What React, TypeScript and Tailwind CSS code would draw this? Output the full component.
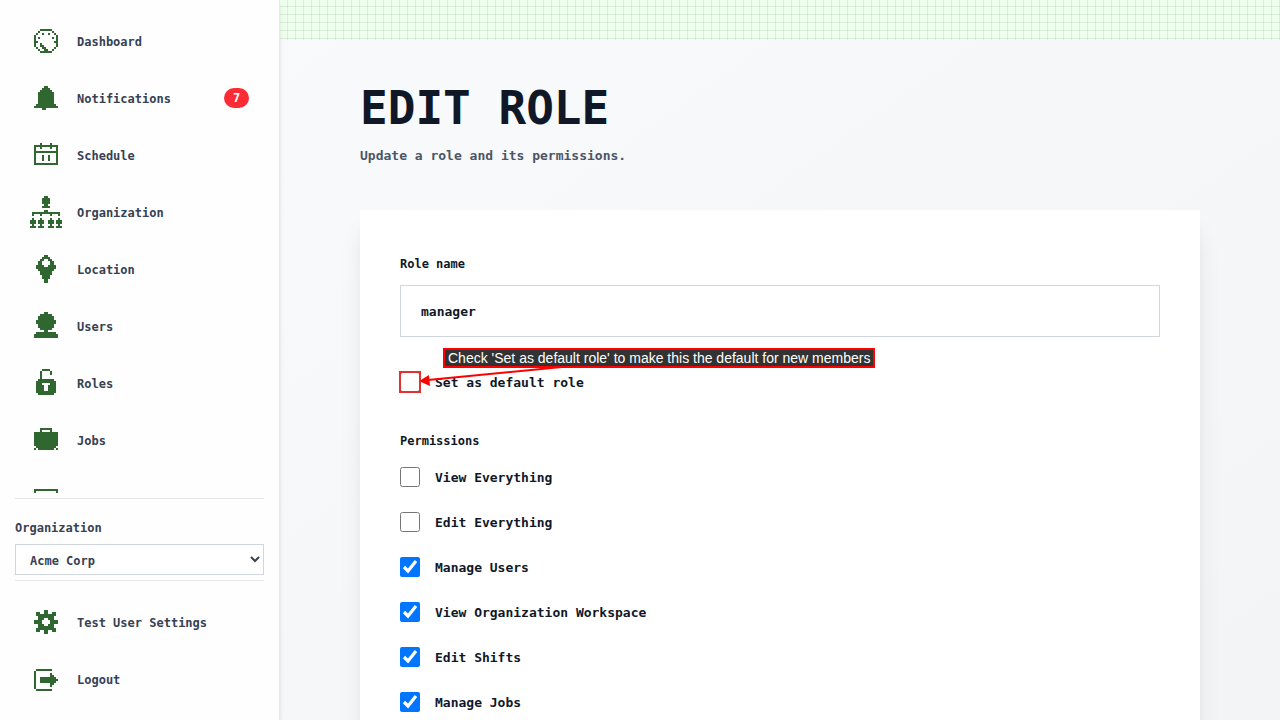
import React, { useState } from "react";

// Icons are bitmaps on a 16x16 grid, "#" is a filled cell
const ICONS: Record<string, { x: number; y: number; rows: string[] }> = {
  dashboard: {
    x: 2,
    y: 2,
    rows: [
      "...######...",
      "..#......#..",
      ".#..#..#..#.",
      "#..........#",
      "#.#......#.#",
      "#..........#",
      "##........##",
      "#..#.......#",
      "#..##......#",
      ".#..##....#.",
      "..#..##..#..",
      "...######...",
    ],
  },
  bell: {
    x: 2,
    y: 2,
    rows: [
      ".....##.....",
      "....####....",
      "...######...",
      "..########..",
      "..########..",
      "..########..",
      "..########..",
      "..########..",
      "..########..",
      ".##########.",
      "############",
      "....##......",
    ],
  },
  calendar: {
    x: 2,
    y: 2,
    rows: [
      "...#....#...",
      "############",
      "#..#....#..#",
      "#..........#",
      "############",
      "#..........#",
      "#...#..#...#",
      "#...#..#...#",
      "#...#..#...#",
      "#..........#",
      "############",
    ],
  },
  organization: {
    x: 0,
    y: 0,
    rows: [
      ".......##.......",
      "......####......",
      "......####......",
      "......####......",
      ".......##.......",
      "......####......",
      "................",
      ".......##.......",
      ".##############.",
      ".#...#....#...#.",
      "................",
      ".#...#....#...#.",
      "###.###..###.###",
      "###.###..###.###",
      ".#...#....#...#.",
      "###.###..###.###",
    ],
  },
  location: {
    x: 3,
    y: 1,
    rows: [
      "....##....",
      "...####...",
      "..##..##..",
      ".##....##.",
      ".##....##.",
      "####..####",
      "##########",
      ".########.",
      "..######..",
      "..######..",
      "...####...",
      "...####...",
      "....##....",
      "....##....",
    ],
  },
  user: {
    x: 2,
    y: 1,
    rows: [
      ".....##.....",
      "...######...",
      "..########..",
      "..########..",
      ".##########.",
      ".##########.",
      "..########..",
      "..########..",
      "...######...",
      ".....##.....",
      ".##########.",
      "############",
      "############",
    ],
  },
  lock: {
    x: 3,
    y: 1,
    rows: [
      "...####...",
      "..#....#..",
      "..#....#..",
      "..#.......",
      "..#.......",
      ".########.",
      "##########",
      "###....###",
      "####..####",
      "####..####",
      "####..####",
      "##########",
      ".########.",
    ],
  },
  briefcase: {
    x: 2,
    y: 2,
    rows: [
      "...######...",
      "...#....#...",
      "############",
      "############",
      "############",
      "############",
      "############",
      "############",
      "############",
      ".##########.",
      "#.########.#",
    ],
  },
  board: {
    x: 2,
    y: 4,
    rows: [
      "############",
      "#..........#",
      "#..........#",
      "#..........#",
      "#..........#",
      "#..........#",
      "############",
    ],
  },
  gear: {
    x: 2,
    y: 2,
    rows: [
      ".....##.....",
      ".##..##..##.",
      ".##########.",
      "..########..",
      "..###..###..",
      "####....####",
      "####....####",
      "..###..###..",
      "..########..",
      ".##########.",
      ".##..##..##.",
      ".....##.....",
    ],
  },
  logout: {
    x: 2,
    y: 3,
    rows: [
      ".########...",
      "#...........",
      "#.......#...",
      "#.......##..",
      "#..########.",
      "#..#########",
      "#..########.",
      "#.......##..",
      "#.......#...",
      "#...........",
      ".########...",
    ],
  },
};

const NAV_ITEMS = [
  { label: "Dashboard", icon: "dashboard" },
  { label: "Notifications", icon: "bell", badge: 7 },
  { label: "Schedule", icon: "calendar" },
  { label: "Organization", icon: "organization" },
  { label: "Location", icon: "location" },
  { label: "Users", icon: "user" },
  { label: "Roles", icon: "lock" },
  { label: "Jobs", icon: "briefcase" },
  { label: "", icon: "board" },
];

const FOOTER_ITEMS = [
  { label: "Test User Settings", icon: "gear" },
  { label: "Logout", icon: "logout" },
];

const PERMISSIONS = [
  { id: "view-everything", label: "View Everything", checked: false },
  { id: "edit-everything", label: "Edit Everything", checked: false },
  { id: "manage-users", label: "Manage Users", checked: true },
  { id: "view-workspace", label: "View Organization Workspace", checked: true },
  { id: "edit-shifts", label: "Edit Shifts", checked: true },
  { id: "manage-jobs", label: "Manage Jobs", checked: true },
];

function PixelIcon({ name }: { name: string }) {
  const icon = ICONS[name];
  let d = "";
  icon.rows.forEach((row, y) => {
    for (const run of row.matchAll(/#+/g)) {
      d += `M${icon.x + run.index} ${icon.y + y}h${run[0].length}v1h-${run[0].length}z`;
    }
  });
  return (
    <svg viewBox="0 0 16 16" shapeRendering="crispEdges" className="h-8 w-8 shrink-0 fill-[#306630]">
      <path d={d} />
    </svg>
  );
}

function NavItem({ label, icon, badge }: { label: string; icon: string; badge?: number }) {
  return (
    <a href="#" className="flex h-14 shrink-0 items-center gap-[15px] px-[30px] text-gray-700">
      <PixelIcon name={icon} />
      <span className="pt-0.5">{label}</span>
      {badge && (
        <span className="ml-auto flex h-5 w-[25px] items-center justify-center rounded-full bg-[#fb2c36] text-white">
          {badge}
        </span>
      )}
    </a>
  );
}

function CheckRow({ label, checked, onChange }: { label: string; checked: boolean; onChange: () => void }) {
  return (
    <label className="flex h-6 items-center gap-[15px]">
      <input type="checkbox" checked={checked} onChange={onChange} className="h-5 w-5" />
      <span className="pt-0.5">{label}</span>
    </label>
  );
}

function Sidebar() {
  return (
    <aside className="z-10 flex w-[280px] shrink-0 flex-col border-r border-gray-200 bg-[#fefefe] text-[12px] font-bold shadow-md">
      <nav className="mb-[5px] flex min-h-0 flex-1 flex-col gap-px overflow-hidden pt-[13px]">
        {NAV_ITEMS.map((item) => (
          <NavItem key={item.icon} {...item} />
        ))}
      </nav>

      <div className="mx-[15px] flex flex-col border-y border-gray-200 pb-[5px] pt-4 text-gray-700">
        <label htmlFor="organization" className="mb-0.5 leading-[27px]">
          Organization
        </label>
        <select id="organization" className="h-[31px] w-full border border-gray-300 bg-white pl-[10px] pt-0.5">
          <option>Acme Corp</option>
        </select>
      </div>

      <div className="flex flex-col gap-px py-[13px]">
        {FOOTER_ITEMS.map((item) => (
          <NavItem key={item.icon} {...item} />
        ))}
      </div>
    </aside>
  );
}

export default function App() {
  const [roleName, setRoleName] = useState("manager");
  const [isDefault, setIsDefault] = useState(false);
  const [permissions, setPermissions] = useState(PERMISSIONS);

  const togglePermission = (id: string) => {
    setPermissions((prev) => prev.map((p) => (p.id === id ? { ...p, checked: !p.checked } : p)));
  };

  return (
    <div className="flex h-screen font-['DejaVu_Sans_Mono',monospace]">
      <Sidebar />

      <main className="min-w-0 flex-1 overflow-y-auto bg-linear-to-br from-slate-50 to-gray-100 [scrollbar-width:none]">
        {/* Grid paper strip */}
        <div className="h-10 bg-[#eeffee] bg-[linear-gradient(#00500018_1px,transparent_1px),linear-gradient(90deg,#00500018_1px,transparent_1px)] bg-[size:8px_8px] bg-[position:7px_6px]" />

        <div className="px-20 py-10">
          <h1 className="text-[46px] font-bold leading-14 text-gray-900">EDIT ROLE</h1>
          <p className="mt-2 text-[13px] font-bold leading-6 text-gray-600">Update a role and its permissions.</p>

          <form className="mt-[42px] bg-white p-10 text-[13px] font-bold text-gray-900 shadow-xl">
            <label htmlFor="role-name" className="block text-[12px] leading-7">
              Role name
            </label>
            <input
              id="role-name"
              type="text"
              value={roleName}
              onChange={(e) => setRoleName(e.target.value)}
              className="mt-[7px] block h-[52px] w-full border border-gray-300 bg-white px-5"
            />

            <div className="relative my-[33px]">
              <CheckRow label="Set as default role" checked={isDefault} onChange={() => setIsDefault(!isDefault)} />

              {/* Callout over the default role box */}
              <div className="pointer-events-none absolute -left-px top-px h-[22px] w-[22px] border-2 border-[#e53030]" />
              <svg viewBox="0 0 160 20" className="pointer-events-none absolute -top-1 left-5 h-5 w-40">
                <path d="M152 0L8 14" stroke="#f00" strokeWidth="2" />
                <path d="M-1 15L9 9L10 20z" fill="#f00" />
              </svg>
              <div className="pointer-events-none absolute -top-[22px] left-[43px] flex h-5 items-center whitespace-nowrap border-2 border-[#f00] bg-[#333] px-[3px] font-['Liberation_Sans',sans-serif] text-[14px] font-normal text-white">
                Check 'Set as default role' to make this the default for new members
              </div>
            </div>

            <fieldset>
              <legend className="text-[12px] leading-7">Permissions</legend>
              <div className="mt-[10px] flex flex-col gap-[21px]">
                {permissions.map((p) => (
                  <CheckRow key={p.id} label={p.label} checked={p.checked} onChange={() => togglePermission(p.id)} />
                ))}
              </div>
            </fieldset>
          </form>
        </div>
      </main>
    </div>
  );
}
